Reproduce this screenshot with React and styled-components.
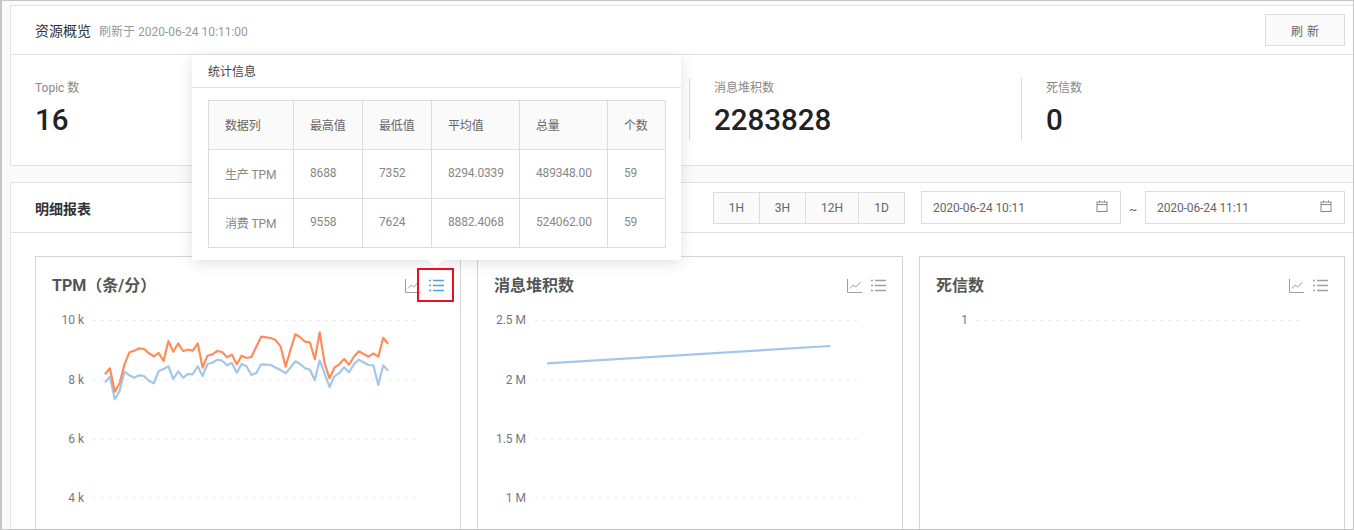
import React from "react";
import styled, { createGlobalStyle } from "styled-components";

const GlobalStyle = createGlobalStyle`
  html, body {
    margin: 0;
    padding: 0;
    overflow: hidden;
    font-family: Roboto, "Noto Sans CJK SC", sans-serif;
    font-size: 12px;
    color: #666;
  }
`;

const Frame = styled.div`
  position: relative;
  box-sizing: border-box;
  width: 1354px;
  height: 530px;
  overflow: hidden;
  padding: 4px 0 0 8px;
  background: #fafafa;
  border: 1px solid #c6c6c6;
  border-left-width: 2px;
`;

const Panel = styled.section`
  background: #fff;
  border: 1px solid #e2e2e2;
  border-right: none;
  margin-bottom: 16px;
`;

const PanelHeader = styled.div`
  box-sizing: border-box;
  display: flex;
  align-items: center;
  justify-content: space-between;
  height: ${(p) => p.$height}px;
  padding: 0 8px 0 24px;
  border-bottom: 1px solid #e2e2e2;
`;

const TitleGroup = styled.div`
  display: flex;
  align-items: baseline;
  gap: 8px;
`;

const PanelTitle = styled.h2`
  margin: 0;
  font-size: 14px;
  font-weight: ${(p) => (p.$bold ? 700 : 400)};
  color: #333;
`;

const RefreshedAt = styled.span`
  font-size: 12px;
  color: #999;
`;

const RefreshButton = styled.button`
  width: 80px;
  height: 32px;
  padding: 0;
  background: #fafafa;
  border: 1px solid #ddd;
  font: inherit;
  color: #666;
  word-spacing: 1px;
`;

const StatsRow = styled.div`
  display: grid;
  grid-template-columns: 346px 332px 332px 1fr;
  padding: 23px 0 24px;
`;

const Stat = styled.div`
  box-sizing: border-box;
  height: 63px;
  padding-left: 24px;
  border-left: ${(p) => (p.$first ? "none" : "1px solid #ddd")};
`;

const StatLabel = styled.div`
  font-size: 12px;
  line-height: 20px;
  color: #888;
`;

const StatValue = styled.div`
  margin-top: 4px;
  font-size: 29.5px;
  line-height: 36px;
  font-weight: 500;
  color: #222;
`;

const Filters = styled.div`
  display: flex;
  align-items: center;
`;

const RangeGroup = styled.div`
  display: flex;
  margin-right: 16px;
  background: #fafafa;
  border: 1px solid #ddd;
`;

const RangeButton = styled.button`
  box-sizing: border-box;
  width: ${(p) => p.$width}px;
  height: 30px;
  padding: 0;
  background: none;
  border: none;
  border-left: ${(p) => (p.$first ? "none" : "1px solid #ddd")};
  font: inherit;
  color: #666;
`;

const DateBox = styled.div`
  box-sizing: border-box;
  display: flex;
  align-items: center;
  justify-content: space-between;
  width: 200px;
  height: 33px;
  padding: 0 12px 0 11px;
  background: #fff;
  border: 1px solid #ddd;
  letter-spacing: -0.1px;
  color: #666;

  svg {
    margin-bottom: 4px;
  }
`;

const Tilde = styled.span`
  width: 24px;
  padding-top: 5px;
  text-align: center;
  color: #666;
`;

const CardRow = styled.div`
  display: grid;
  grid-template-columns: repeat(3, 426px);
  gap: 16px;
  padding: 23px 0 0 24px;
`;

const Card = styled.div`
  box-sizing: border-box;
  height: 320px;
  background: #fff;
  border: 1px solid #d4d4d4;
`;

const CardHeader = styled.div`
  display: flex;
  align-items: center;
  justify-content: space-between;
  height: 48px;
  padding: 9px 16px 0;
  box-sizing: border-box;
`;

const CardTitle = styled.h3`
  margin: 0 0 4px;
  font-size: 16px;
  font-weight: 700;
  color: #555;
`;

const IconGroup = styled.div`
  display: flex;
  gap: 9px;
`;

const IconSvg = styled.svg`
  display: block;
  width: 15px;
  height: 15px;
  fill: none;
  stroke: ${(p) => (p.$active ? "#4ea1e8" : "#a0a0a0")};
  stroke-width: 1;
`;

const ChartSvg = styled.svg`
  display: block;
  width: 424px;
  height: 220px;
  font-family: Roboto, sans-serif;
  font-size: 12px;
`;

const GridLine = styled.line`
  stroke: #eee;
  stroke-dasharray: 4 4;
`;

const AxisLabel = styled.text`
  fill: #777;
  text-anchor: end;
`;

const Series = styled.polyline`
  fill: none;
  stroke: ${(p) => p.$color};
  stroke-width: 2.2;
  stroke-linejoin: round;
`;

const Popover = styled.div`
  position: absolute;
  left: 190px;
  top: 54px;
  width: 489px;
  height: 205px;
  background: #fff;
  box-shadow: 0 3px 14px rgba(0, 0, 0, 0.12);

  &::after {
    content: "";
    position: absolute;
    left: 238px;
    bottom: -5px;
    width: 11px;
    height: 11px;
    background: #fff;
    transform: rotate(45deg);
  }
`;

const PopoverTitle = styled.div`
  box-sizing: border-box;
  height: 33px;
  padding: 0 16px;
  line-height: 35px;
  color: #444;
  border-bottom: 1px solid #e2e2e2;
`;

const StatsTable = styled.table`
  position: relative;
  z-index: 1;
  width: 457px;
  margin: 12px 0 0 16px;
  border-collapse: collapse;
  table-layout: fixed;
  color: #888;

  th, td {
    height: 49px;
    padding: 0 0 2px 16px;
    box-sizing: border-box;
    border: 1px solid #ddd;
    font-weight: 400;
    text-align: left;
    letter-spacing: -0.15px;
  }

  th {
    background: #fafafa;
    color: #666;
  }
`;

const Highlight = styled.div`
  position: absolute;
  left: 415px;
  top: 267px;
  width: 37px;
  height: 34px;
  box-sizing: border-box;
  border: 2px solid #e81123;
`;

// sampled off the screenshot, 3x pixels
const produced = [358,340,410,385,328,292,287,280,282,295,304,294,318,258,290,265,288,284,287,265,338,302,298,288,291,307,299,328,302,309,306,275,245,247,249,256,275,335,285,238,247,260,263,313,232,325,370,338,328,312,329,305,289,297,305,295,305,248,266];
const consumed = [382,365,433,408,350,361,368,361,363,377,385,348,342,334,372,349,368,357,358,334,363,327,323,314,317,331,324,353,327,334,360,354,328,329,330,338,345,355,338,319,327,340,344,375,316,355,396,364,354,337,352,328,314,322,330,331,390,331,347];

const toPoints = (samples) =>
  samples.map((y, i) => `${(69 + i * 4.88).toFixed(1)},${(y / 3 - 50).toFixed(1)}`).join(" ");

const tableRows = [
  ["生产 TPM", "8688", "7352", "8294.0339", "489348.00", "59"],
  ["消费 TPM", "9558", "7624", "8882.4068", "524062.00", "59"],
];

const tickY = [15.5, 75, 134, 193];
const labelY = [18.5, 79, 138, 197];

function LineIcon() {
  return (
    <IconSvg viewBox="0 0 15 15">
      <path d="M.5 1v13.5H15" />
      <path d="M3 10.5l3.2-3.5 2.6 2 4.7-5" />
    </IconSvg>
  );
}

function ListIcon({ active }) {
  return (
    <IconSvg viewBox="0 0 15 15" $active={active}>
      <path d="M0 2.5h2M0 7.5h2M0 12.5h2" strokeWidth="1.6" />
      <path d="M4 2.5h11M4 7.5h11M4 12.5h11" strokeWidth="1.4" />
    </IconSvg>
  );
}

function CalendarIcon() {
  return (
    <svg width="12" height="12" viewBox="0 0 12 12" fill="none" stroke="#888">
      <rect x="1" y="2" width="10" height="9.5" />
      <path d="M1 4.5h10M3.5 .5v2M8.5 .5v2" />
    </svg>
  );
}

function ChartCard({ title, ticks, active, children }) {
  return (
    <Card>
      <CardHeader>
        <CardTitle>{title}</CardTitle>
        <IconGroup>
          <LineIcon />
          <ListIcon active={active} />
        </IconGroup>
      </CardHeader>
      <ChartSvg viewBox="0 0 424 220">
        {ticks.map((label, i) => (
          <g key={label}>
            <GridLine x1="56" x2="382" y1={tickY[i]} y2={tickY[i]} />
            <AxisLabel x="48" y={labelY[i]}>{label}</AxisLabel>
          </g>
        ))}
        {children}
      </ChartSvg>
    </Card>
  );
}

export default function App() {
  return (
    <Frame>
      <GlobalStyle />
      <Panel>
        <PanelHeader $height={49}>
          <TitleGroup>
            <PanelTitle>资源概览</PanelTitle>
            <RefreshedAt>刷新于 2020-06-24 10:11:00</RefreshedAt>
          </TitleGroup>
          <RefreshButton>刷 新</RefreshButton>
        </PanelHeader>
        <StatsRow>
          <Stat $first>
            <StatLabel>Topic 数</StatLabel>
            <StatValue>16</StatValue>
          </Stat>
          <Stat />
          <Stat>
            <StatLabel>消息堆积数</StatLabel>
            <StatValue>2283828</StatValue>
          </Stat>
          <Stat>
            <StatLabel>死信数</StatLabel>
            <StatValue>0</StatValue>
          </Stat>
        </StatsRow>
      </Panel>

      <Panel>
        <PanelHeader $height={50}>
          <PanelTitle $bold>明细报表</PanelTitle>
          <Filters>
            <RangeGroup>
              <RangeButton $first $width={45}>1H</RangeButton>
              <RangeButton $width={46}>3H</RangeButton>
              <RangeButton $width={53}>12H</RangeButton>
              <RangeButton $width={46}>1D</RangeButton>
            </RangeGroup>
            <DateBox>2020-06-24 10:11<CalendarIcon /></DateBox>
            <Tilde>~</Tilde>
            <DateBox>2020-06-24 11:11<CalendarIcon /></DateBox>
          </Filters>
        </PanelHeader>
        <CardRow>
          <ChartCard title="TPM（条/分）" ticks={["10 k", "8 k", "6 k", "4 k"]} active>
            <Series $color="#a4c6ea" points={toPoints(consumed)} />
            <Series $color="#ff8c5a" points={toPoints(produced)} />
          </ChartCard>
          <ChartCard title="消息堆积数" ticks={["2.5 M", "2 M", "1.5 M", "1 M"]}>
            <Series $color="#a4c6ea" points="69,58.3 352.5,41" />
          </ChartCard>
          <ChartCard title="死信数" ticks={["1"]} />
        </CardRow>
      </Panel>

      <Popover>
        <PopoverTitle>统计信息</PopoverTitle>
        <StatsTable>
          <colgroup>
            <col width="85" />
            <col width="69" />
            <col width="69" />
            <col width="88" />
            <col width="88" />
            <col width="58" />
          </colgroup>
          <thead>
            <tr>
              <th>数据列</th>
              <th>最高值</th>
              <th>最低值</th>
              <th>平均值</th>
              <th>总量</th>
              <th>个数</th>
            </tr>
          </thead>
          <tbody>
            {tableRows.map((row) => (
              <tr key={row[0]}>
                {row.map((cell, i) => (
                  <td key={i}>{cell}</td>
                ))}
              </tr>
            ))}
          </tbody>
        </StatsTable>
      </Popover>
      <Highlight />
    </Frame>
  );
}
